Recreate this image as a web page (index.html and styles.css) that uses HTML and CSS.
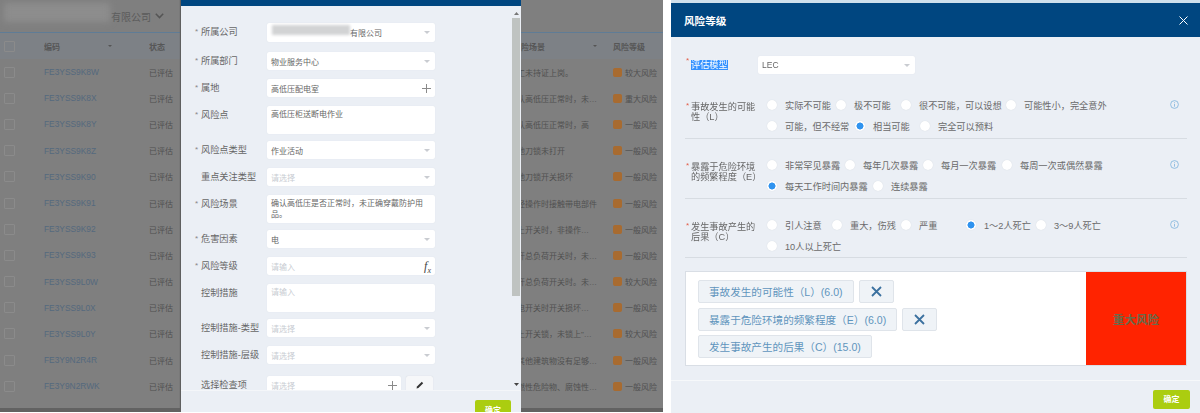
FILE: index.html
```html
<!DOCTYPE html>
<html lang="zh">
<head>
<meta charset="utf-8">
<title>风险等级</title>
<link rel="stylesheet" href="styles.css">
</head>
<body>
<div class="page">
  <section class="left">
    <div class="topbar"><div class="smudge"></div><span class="company">有限公司</span>
      <svg class="chev" width="9" height="6" viewBox="0 0 9 6"><path d="M.8.8 4.500 4.600 8.200.8" fill="none" stroke="#555" stroke-width="1.500"/></svg></div>
    <div class="tr thead">
      <div class="cell"><i class="check"></i></div>
      <div class="cell">编码<b class="sort"></b></div>
      <div class="cell">状态</div>
      <div class="cell scene-head"><span>风险场景</span><b class="sort"></b></div>
      <div class="cell">风险等级</div>
    </div>
    <div class="tr"><div class="cell"><i class="check"></i></div><div class="cell code">FE3YSS9K8W</div><div class="cell">已评估</div><div class="cell scene">员工未持证上岗。</div><div class="cell"><i class="dot"></i>较大风险</div></div>
    <div class="tr"><div class="cell"><i class="check"></i></div><div class="cell code">FE3YSS9K8X</div><div class="cell">已评估</div><div class="cell scene">确认高低压正常时，未…</div><div class="cell"><i class="dot"></i>重大风险</div></div>
    <div class="tr"><div class="cell"><i class="check"></i></div><div class="cell code">FE3YSS9K8Y</div><div class="cell">已评估</div><div class="cell scene">确认高低压正常时，高</div><div class="cell"><i class="dot"></i>一般风险</div></div>
    <div class="tr"><div class="cell"><i class="check"></i></div><div class="cell code">FE3YSS9K8Z</div><div class="cell">已评估</div><div class="cell scene">接地刀锁未打开</div><div class="cell"><i class="dot"></i>一般风险</div></div>
    <div class="tr"><div class="cell"><i class="check"></i></div><div class="cell code">FE3YSS9K90</div><div class="cell">已评估</div><div class="cell scene">接地刀锁开关损坏</div><div class="cell"><i class="dot"></i>一般风险</div></div>
    <div class="tr"><div class="cell"><i class="check"></i></div><div class="cell code">FE3YSS9K91</div><div class="cell">已评估</div><div class="cell scene">未经操作时接触带电部件</div><div class="cell"><i class="dot"></i>一般风险</div></div>
    <div class="tr"><div class="cell"><i class="check"></i></div><div class="cell code">FE3YSS9K92</div><div class="cell">已评估</div><div class="cell scene">合上开关时，非操作…</div><div class="cell"><i class="dot"></i>一般风险</div></div>
    <div class="tr"><div class="cell"><i class="check"></i></div><div class="cell code">FE3YSS9K93</div><div class="cell">已评估</div><div class="cell scene">打开总负荷开关时，未…</div><div class="cell"><i class="dot"></i>一般风险</div></div>
    <div class="tr"><div class="cell"><i class="check"></i></div><div class="cell code">FE3YSS9L0W</div><div class="cell">已评估</div><div class="cell scene">打开总负荷开关时。未…</div><div class="cell"><i class="dot"></i>较大风险</div></div>
    <div class="tr"><div class="cell"><i class="check"></i></div><div class="cell code">FE3YSS9L0X</div><div class="cell">已评估</div><div class="cell scene">用电开关时开关损坏…</div><div class="cell"><i class="dot"></i>一般风险</div></div>
    <div class="tr"><div class="cell"><i class="check"></i></div><div class="cell code">FE3YSS9L0Y</div><div class="cell">已评估</div><div class="cell scene">合上开关锁，未锁上"…</div><div class="cell"><i class="dot"></i>较大风险</div></div>
    <div class="tr"><div class="cell"><i class="check"></i></div><div class="cell code">FE3Y9N2R4R</div><div class="cell">已评估</div><div class="cell scene">与其他建筑物没有足够…</div><div class="cell"><i class="dot"></i>一般风险</div></div>
    <div class="tr"><div class="cell"><i class="check"></i></div><div class="cell code">FE3Y9N2RWK</div><div class="cell">已评估</div><div class="cell scene">易燃性危险物、腐蚀性…</div><div class="cell"><i class="dot"></i>一般风险</div></div>
    <div class="tfoot"></div>

    <div class="modal">
      <div class="modal-head"></div>
      <div class="modal-body">
        <div class="form">
          <div class="row row-big"><label class="lbl req">所属公司</label><div class="ctl masked"><i class="mask"></i><span class="val">有限公司</span><i class="arrow"></i></div></div>
          <div class="row"><label class="lbl req">所属部门</label><div class="ctl"><span class="val">物业服务中心</span><i class="arrow"></i></div></div>
          <div class="row"><label class="lbl req">属地</label><div class="ctl"><span class="val">高低压配电室</span>
            <svg class="ic" width="9" height="9" viewBox="0 0 9 9"><path d="M4.500 0v9M0 4.500h9" stroke="#8a8a8a" stroke-width="1"/></svg></div></div>
          <div class="row row-area"><label class="lbl req">风险点</label><div class="ctl area"><span class="val">高低压柜送断电作业</span></div></div>
          <div class="row"><label class="lbl req">风险点类型</label><div class="ctl"><span class="val">作业活动</span><i class="arrow"></i></div></div>
          <div class="row"><label class="lbl">重点关注类型</label><div class="ctl"><span class="ph">请选择</span><i class="arrow"></i></div></div>
          <div class="row row-area"><label class="lbl req">风险场景</label><div class="ctl area"><span class="val">确认高低压是否正常时，未正确穿戴防护用品。</span></div></div>
          <div class="row"><label class="lbl req">危害因素</label><div class="ctl"><span class="val">电</span><i class="arrow"></i></div></div>
          <div class="row"><label class="lbl req">风险等级</label><div class="ctl"><span class="ph">请输入</span><span class="fx">f<sub>x</sub></span></div></div>
          <div class="row row-area"><label class="lbl">控制措施</label><div class="ctl area"><span class="ph">请输入</span></div></div>
          <div class="row"><label class="lbl">控制措施-类型</label><div class="ctl"><span class="ph">请选择</span><i class="arrow"></i></div></div>
          <div class="row row-gap"><label class="lbl">控制措施-层级</label><div class="ctl"><span class="ph">请选择</span><i class="arrow"></i></div></div>
          <div class="row"><label class="lbl">选择检查项</label><div class="ctl short"><span class="ph">请选择</span>
            <svg class="ic" width="9" height="9" viewBox="0 0 9 9"><path d="M4.500 0v9M0 4.500h9" stroke="#8a8a8a" stroke-width="1"/></svg></div>
            <div class="pen"><svg width="8" height="8" viewBox="0 0 8 8"><path d="M.5 7.500 1 5.600 5.800.8 7.200 2.200 2.400 7z" fill="#333"/></svg></div></div>
        </div>
        <div class="scroll">
          <svg class="sc-up" width="5" height="3" viewBox="0 0 5 3"><path d="M0 3 2.500 0 5 3z" fill="#777"/></svg>
          <div class="thumb"></div>
          <svg class="sc-down" width="5" height="3" viewBox="0 0 5 3"><path d="M0 0 2.500 3 5 0z" fill="#444"/></svg>
        </div>
      </div>
      <div class="modal-foot"><button class="btn btn-clip">确定</button></div>
    </div>
  </section>

  <section class="right">
    <header class="r-head"><h1>风险等级</h1>
      <svg width="9" height="9" viewBox="0 0 9 9"><path d="M.5.500l8 8M8.500.500l-8 8" stroke="#fff" stroke-width="1"/></svg></header>
    <div class="r-body">
      <div class="model"><label class="r-lbl req"><mark>评估模型</mark></label>
        <div class="ctl model-ctl"><span class="model-val">LEC</span><i class="arrow"></i></div></div>

      <div class="sec">
        <div class="r-lbl req">事故发生的可能性（L）</div>
        <div class="opts">
          <div class="opt-row l1"><span class="opt"><i class="radio"></i>实际不可能</span><span class="opt"><i class="radio"></i>极不可能</span><span class="opt"><i class="radio"></i>很不可能，可以设想</span><span class="opt"><i class="radio"></i>可能性小，完全意外</span></div>
          <div class="opt-row l2"><span class="opt"><i class="radio"></i>可能，但不经常</span><span class="opt"><i class="radio on"></i>相当可能</span><span class="opt"><i class="radio"></i>完全可以预料</span></div>
        </div>
        <svg class="info" width="9" height="9" viewBox="0 0 9 9"><circle cx="4.500" cy="4.500" r="3.900" fill="none" stroke="#7cb2dc" stroke-width=".8"/><path d="M4.500 2.300v.8M4.500 3.900v2.800" stroke="#7cb2dc" stroke-width=".8"/></svg>
      </div>

      <div class="sec">
        <div class="r-lbl req">暴露于危险环境的频繁程度（E）</div>
        <div class="opts">
          <div class="opt-row e1"><span class="opt"><i class="radio"></i>非常罕见暴露</span><span class="opt"><i class="radio"></i>每年几次暴露</span><span class="opt"><i class="radio"></i>每月一次暴露</span><span class="opt"><i class="radio"></i>每周一次或偶然暴露</span></div>
          <div class="opt-row e2"><span class="opt"><i class="radio on"></i>每天工作时间内暴露</span><span class="opt"><i class="radio"></i>连续暴露</span></div>
        </div>
        <svg class="info" width="9" height="9" viewBox="0 0 9 9"><circle cx="4.500" cy="4.500" r="3.900" fill="none" stroke="#7cb2dc" stroke-width=".8"/><path d="M4.500 2.300v.8M4.500 3.900v2.800" stroke="#7cb2dc" stroke-width=".8"/></svg>
      </div>

      <div class="sec sec-last">
        <div class="r-lbl req">发生事故产生的后果（C）</div>
        <div class="opts">
          <div class="opt-row c1"><span class="opt"><i class="radio"></i>引人注意</span><span class="opt"><i class="radio"></i>重大，伤残</span><span class="opt"><i class="radio"></i>严重</span><span class="opt"><i class="radio on"></i>1～2人死亡</span><span class="opt"><i class="radio"></i>3～9人死亡</span></div>
          <div class="opt-row"><span class="opt"><i class="radio"></i>10人以上死亡</span></div>
        </div>
        <svg class="info" width="9" height="9" viewBox="0 0 9 9"><circle cx="4.500" cy="4.500" r="3.900" fill="none" stroke="#7cb2dc" stroke-width=".8"/><path d="M4.500 2.300v.8M4.500 3.900v2.800" stroke="#7cb2dc" stroke-width=".8"/></svg>
      </div>

      <div class="result">
        <div class="chips">
          <div class="chip-row"><span class="chip">事故发生的可能性（L）(6.0)</span><span class="chip chip-x"><svg width="11" height="11" viewBox="0 0 11 11"><path d="M1 1l9 9M10 1l-9 9" stroke="#3b719f" stroke-width="1.800"/></svg></span></div>
          <div class="chip-row"><span class="chip">暴露于危险环境的频繁程度（E）(6.0)</span><span class="chip chip-x"><svg width="11" height="11" viewBox="0 0 11 11"><path d="M1 1l9 9M10 1l-9 9" stroke="#3b719f" stroke-width="1.800"/></svg></span></div>
          <div class="chip-row"><span class="chip">发生事故产生的后果（C）(15.0)</span></div>
        </div>
        <div class="level">重大风险</div>
      </div>
    </div>
    <footer class="r-foot"><button class="btn">确定</button></footer>
  </section>
</div>
</body>
</html>
```
FILE: styles.css
```css
* { box-sizing: border-box; }
html, body { margin: 0; padding: 0; background: #fff; }
body { width: 1200px; height: 413px; overflow: hidden; font-family: "Liberation Sans", "Noto Sans CJK SC", sans-serif; }
.page { display: flex; align-items: flex-start; width: 1200px; height: 413px; gap: 8px; filter: blur(.35px); }

/* left: dimmed table */
.left { position: relative; width: 663px; height: 412px; background: #7f7f7f; overflow: hidden; color: #505050; font-size: 8px; }
.topbar { position: relative; display: flex; align-items: center; height: 33px; padding: 0 0 0 111px; border-bottom: 1px solid #5f7c96; color: #5b5b5b; }
.smudge { position: absolute; left: 4px; top: 3px; width: 106px; height: 19px; background: #8d8d8d; filter: blur(3px); }
.company { font-size: 10px; }
.chev { margin-left: 4px; }
.tr { display: grid; grid-template-columns: 44px 105px 360px 104px 1fr; height: 26.2px; align-items: center; }
.thead { height: 26px; background: #7d8186; font-weight: 700; color: #565656; }
.cell { display: flex; align-items: center; white-space: nowrap; overflow: hidden; }
.check { display: block; width: 11px; height: 11px; margin-left: 4px; border: 1px solid #8b8b8b; border-radius: 1px; }
.sort { width: 0; height: 0; margin-left: 48px; border: 2.500px solid transparent; border-top-color: #555; border-bottom: 0; }
.scene-head span { margin-left: 4px; }
.code { color: #54697e; font-size: 8.400px; }
.scene { display: block; }
.dot { display: block; width: 9px; height: 9px; margin-right: 3px; background: #a86b30; border-radius: 2px; }
.tfoot { height: 4px; margin-top: 8.400px; background: #626262; }

/* left: modal */
.modal { position: absolute; left: 181px; top: 0; width: 340px; height: 413px; display: flex; flex-direction: column; background: #ebeff5; box-shadow: -1px 0 1px #5f5f5f; }
.modal-head { height: 6px; background: #004680; flex: none; }
.modal-body { flex: 1; display: flex; min-height: 0; overflow: hidden; }
.form { flex: 1; padding: 17px 0 0 14px; }
.row { display: flex; height: 18px; margin-bottom: 9px; }
.row-big { height: 19px; margin-bottom: 10px; }
.row-area { height: 28px; margin-bottom: 7px; }
.row-gap { margin-bottom: 12px; }
.lbl { position: relative; display: block; width: 72px; padding: 1px 0 0 6px; color: #666; font-size: 9.200px; line-height: 16px; white-space: nowrap; }
.req::before { content: "*"; position: absolute; left: 0; color: #888; font-size: 8px; }
.ctl { position: relative; display: flex; align-items: center; width: 168px; background: #fff; border-radius: 2px; padding: 0 4px; font-size: 8px; color: #666; box-shadow: 0 0 1px #d5dbe3; }
.ctl.area { align-items: flex-start; padding-top: 3px; line-height: 11px; }
.ctl.short { width: 134px; }
.masked { padding-left: 83px; }
.mask { position: absolute; left: 5px; top: 2px; width: 78px; height: 10px; background: #d2d3d4; filter: blur(1.500px); }
.ph { color: #c8ccd2; }
.arrow { position: absolute; right: 5px; top: 50%; width: 0; height: 0; margin-top: -1.500px; border: 3px solid transparent; border-top: 3px solid #c9ccd1; border-bottom: 0; }
.ic { position: absolute; right: 4px; top: 4.500px; }
.fx { position: absolute; right: 4px; top: 1px; font: italic 12px/16px "Liberation Serif", serif; color: #444; }
.fx sub { font-size: 8px; }
.pen { display: flex; align-items: center; justify-content: center; width: 27px; height: 18px; margin-left: 5px; background: #f6f7f9; border-radius: 2px; box-shadow: 0 0 1px #c8ced6; }
.scroll { position: relative; width: 9px; flex: none; }
.sc-up { position: absolute; left: 2px; top: 6px; }
.sc-down { position: absolute; left: 2px; top: 377px; }
.thumb { position: absolute; left: 0; top: 12px; width: 8px; height: 278px; background: #bfc3c1; }
.modal-foot { position: relative; flex: none; height: 23px; border-top: 1px solid #f4f6f9; padding: 9px 0 0 294px; }
.btn { display: block; border: 0; padding: 0; width: 37px; height: 19px; background: #abcd10; color: #fff; font: 700 8px/19px "Liberation Sans", "Noto Sans CJK SC", sans-serif; border-radius: 2px; }
.btn-clip { width: 36px; height: 20px; line-height: 21px; }

/* right dialog */
.right { flex: 1; display: flex; flex-direction: column; height: 413px; padding-top: 3px; background: #ebeff5; overflow: hidden; box-shadow: inset 0 3px 0 #cfe0ec; }
.r-head { flex: none; display: flex; align-items: center; justify-content: space-between; height: 34px; padding: 0 12px 0 13px; background: #004680; }
.r-head h1 { margin: 0; color: #fff; font-size: 10.600px; font-weight: 700; }
.r-body { flex: none; height: 343px; padding: 19px 13px 0 14px; }
.r-foot { flex: 1; border-top: 1px solid #f6f8fa; display: flex; justify-content: flex-end; padding: 9px 10px 0 0; }
.model { display: flex; height: 18px; margin-bottom: 5px; }
.r-lbl { position: relative; flex: none; width: 82px; padding-left: 6px; padding-right: 4px; font-size: 9.200px; line-height: 10px; color: #666; }
.r-lbl.req::before { color: #e2604b; top: -1px; left: 1px; }
.model .r-lbl { width: 73px; line-height: 11px; padding-top: 4px; }
mark { background: #3391ff; color: #fff; }
.model-ctl { width: 157px; }
.model-val { font-size: 8.500px; }
.sec { display: flex; height: 60px; padding-top: 15px; border-bottom: 1px solid #d7dce2; }
.sec-last { height: 59px; }
.sec > .r-lbl { margin-top: 7.500px; }
.opts { flex: 1; }
.opt-row { display: grid; grid-auto-flow: column; grid-auto-columns: max-content; height: 21px; align-items: center; }
.l1 { grid-template-columns: 69px 65px 105px auto; }
.l2 { grid-template-columns: 88px 65px auto; }
.e1 { grid-template-columns: 78px 78px 79px auto; }
.e2 { grid-template-columns: 106px auto; }
.c1 { grid-template-columns: 65px 69px 65px 70px auto; }
.opt { display: flex; align-items: center; font-size: 9.200px; color: #6a6a6a; white-space: nowrap; }
.radio { flex: none; display: block; width: 10px; height: 10px; margin-right: 8px; background: #fff; border-radius: 50%; box-shadow: 0 0 1px #ccd2da; }
.radio.on { background: radial-gradient(circle, #2f93ef 0 3.200px, #fff 3.800px); }
.info { flex: none; margin: 6px 8px 0 0; }
.result { display: flex; height: 95px; margin-top: 13px; background: #fff; border: 1px solid #d9dee5; }
.chips { flex: 1; padding: 8px 0 0 12px; }
.chip-row { display: flex; gap: 5px; height: 27.500px; }
.chip { display: flex; align-items: center; height: 23px; padding: 0 10px; background: #eff3f7; border: 1px solid #dfe4ea; border-radius: 2px; color: #5f95bd; font-size: 10.600px; white-space: nowrap; }
.chip-x { width: 35px; justify-content: center; padding: 0; }
.level { display: flex; align-items: center; justify-content: center; width: 100px; background: #ff2300; color: #6a6a4a; font-size: 11.600px; font-weight: 700; }
```
